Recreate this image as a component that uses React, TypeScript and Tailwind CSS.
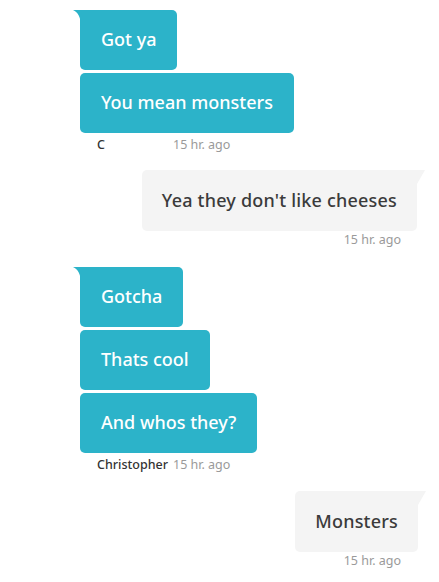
import React from "react";

const font = { fontFamily: "'Noto Sans', Lato, sans-serif" };

function LeftTail() {
  return (
    <svg className="absolute left-[-7px] top-0" width="8" height="16" viewBox="0 0 8 16">
      <path d="M0 0 H8 V16 C8 8 5 2 0 0 Z" fill="#2cb3c9" />
    </svg>
  );
}

function RightTail() {
  return (
    <svg className="absolute right-[-8px] top-0" width="9" height="14" viewBox="0 0 9 14">
      <path d="M0 0 H9 L1 14 H0 Z" fill="#f4f4f4" />
    </svg>
  );
}

function LeftBubble({ text, tail }: { text: string; tail?: boolean }) {
  return (
    <div className={`relative h-[60px] flex items-center px-[21px] bg-[#2cb3c9] text-white text-[18px] font-medium rounded-[5px] ${tail ? "rounded-tl-none" : ""}`}>
      {tail && <LeftTail />}
      <span className="leading-none -mt-[2px]">{text}</span>
    </div>
  );
}

function RightBubble({ text }: { text: string }) {
  return (
    <div className="relative h-[61px] flex items-center px-[20px] bg-[#f4f4f4] text-[#3b3b3b] text-[18px] font-medium tracking-[0.2px] rounded-[5px] rounded-tr-none">
      <RightTail />
      <span className="leading-none -mt-[2px]">{text}</span>
    </div>
  );
}

function Meta({ name }: { name: string }) {
  return (
    <div className="flex items-center h-[16px] mt-[4px] ml-[97px] text-[12.5px] leading-none">
      <span className="min-w-[76px] text-[#333] font-medium">{name}</span>
      <span className="text-[#9a9a9a]">15 hr. ago</span>
    </div>
  );
}

function Time() {
  return (
    <div className="flex justify-end h-[16px] mt-[1px] mr-[38px] text-[12.5px] leading-none items-center text-[#9a9a9a]">
      15 hr. ago
    </div>
  );
}

export default function App() {
  return (
    <div className="w-[439px] h-[582px] bg-white overflow-hidden pt-[10px]" style={font}>
      <div className="flex flex-col items-start gap-[3px] ml-[80px]">
        <LeftBubble text="Got ya" tail />
        <LeftBubble text="You mean monsters" />
      </div>
      <Meta name="C" />
      <div className="flex justify-end mr-[22px] mt-[17px]">
        <RightBubble text="Yea they don't like cheeses" />
      </div>
      <Time />
      <div className="flex flex-col items-start gap-[3px] ml-[80px] mt-[19px]">
        <LeftBubble text="Gotcha" tail />
        <LeftBubble text="Thats cool" />
        <LeftBubble text="And whos they?" />
      </div>
      <Meta name="Christopher" />
      <div className="flex justify-end mr-[21px] mt-[18px]">
        <RightBubble text="Monsters" />
      </div>
      <Time />
    </div>
  );
}
